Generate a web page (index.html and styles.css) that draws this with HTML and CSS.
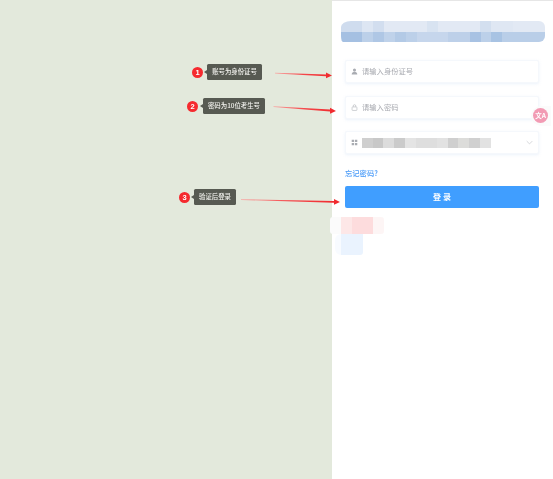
FILE: index.html
```html
<!DOCTYPE html>
<html lang="zh-CN">
<head>
<meta charset="utf-8">
<title>登录</title>
<link rel="stylesheet" href="styles.css">
</head>
<body>
<div class="page">
  <section class="canvas">
    <div class="note note-1"><span class="badge">1</span><span class="tip">账号为身份证号</span></div>
    <div class="note note-2"><span class="badge">2</span><span class="tip">密码为10位考生号</span></div>
    <div class="note note-3"><span class="badge">3</span><span class="tip">验证后登录</span></div>
  </section>
  <main class="panel">
    <div class="logo"><div class="logo-top"></div><div class="logo-bottom"></div></div>
    <form class="form">
      <div class="field field-first">
        <svg class="icon" viewBox="0 0 10 10"><circle cx="5" cy="3" r="2.2" fill="#a9acb2"/><path d="M1 9.2c0-2.6 1.8-3.4 4-3.4s4 .8 4 3.4z" fill="#a9acb2"/></svg>
        <span class="placeholder">请输入身份证号</span>
      </div>
      <div class="field">
        <svg class="icon" viewBox="0 0 10 10"><rect x="1.5" y="4.2" width="7" height="5" rx="1" fill="none" stroke="#b4b7bc" stroke-width=".9"/><path d="M3.2 4.2V2.8a1.8 1.8 0 0 1 3.6 0v1.4" fill="none" stroke="#b4b7bc" stroke-width=".9"/></svg>
        <span class="placeholder">请输入密码</span>
      </div>
      <div class="field field-select">
        <svg class="icon" viewBox="0 0 10 10"><path d="M1 1h3.4v3.4H1zM5.6 1H9v3.4H5.6zM1 5.6h3.4V9H1zM5.6 5.6H9V9H5.6z" fill="#a9acb2"/></svg>
        <div class="mosaic"></div>
        <svg class="chevron" viewBox="0 0 10 6"><path d="M1 1l4 4 4-4" fill="none" stroke="#c4c7cc" stroke-width="1"/></svg>
      </div>
      <a class="forgot" href="#">忘记密码?</a>
      <button class="submit" type="button">登 录</button>
    </form>
    <div class="smudge"><div class="smudge-red"></div><div class="smudge-blue"></div></div>
    <div class="float-tab"><span class="float-dot">文A</span></div>
  </main>
  <svg class="arrows" viewBox="0 0 553 479">
    <defs>
      <linearGradient id="fade" x1="0" y1="0" x2="1" y2="0"><stop offset="0" stop-color="#f8a8a4"/><stop offset=".5" stop-color="#f4474a"/><stop offset="1" stop-color="#f0282c"/></linearGradient>
    </defs>
    <path d="M275 72.8 L326 74.6 L326 72.6 L332 75.6 L326 78.2 L326 76.2 L275 73.4z" fill="url(#fade)"/>
    <path d="M273.5 106.3 L330 109.6 L330 107.8 L336 110.9 L330 113.8 L330 111.5 L273.5 107z" fill="url(#fade)"/>
    <path d="M241 199.2 L334 201 L334 199 L340 202 L334 204.8 L334 202.8 L241 199.9z" fill="url(#fade)"/>
  </svg>
</div>
</body>
</html>
```
FILE: styles.css
```css
* { box-sizing: border-box; }
html, body { margin: 0; padding: 0; }
body { font-family: "Noto Sans CJK SC", "Liberation Sans", sans-serif; background: #fff; }
.page { position: relative; display: flex; width: 553px; height: 479px; overflow: hidden; filter: blur(.3px); }
.canvas { position: relative; flex: 0 0 332px; background: #e3e9dc; }
.panel {
  position: relative; flex: 1; padding: 0 13px; background: #fff;
  border-top: 1px solid #e6e6e6; border-right: 1px solid #f0f0f0; margin-right: 1px;
}

.note { position: absolute; display: flex; align-items: center; }
.note-1 { left: 192px; top: 64px; gap: 4px; }
.note-2 { left: 187px; top: 98px; gap: 5px; }
.note-3 { left: 179px; top: 189px; gap: 4px; }
.badge {
  width: 11px; height: 11px; border-radius: 50%; background: #f52a2f; color: #fff;
  font: 700 7.5px/11px "Liberation Sans", sans-serif; text-align: center;
}
.tip {
  position: relative; height: 16px; padding: 0 2px; border-radius: 1.5px; background: #575a52;
  color: #f4f4f0; font-size: 6.4px; font-weight: 500; line-height: 16px; text-align: center; white-space: nowrap;
}
.note-1 .tip { width: 55px; }
.note-2 .tip { width: 62px; }
.note-3 .tip { width: 42px; }
.tip::before {
  content: ""; position: absolute; left: -3px; top: 50%; margin-top: -2px;
  border: 2px solid transparent; border-left: 0; border-right: 3px solid #575a52;
}

.logo { width: 204px; margin: 20px 0 0 -4px; height: 21px; overflow: hidden; border-radius: 10px 6px 6px 2px / 6px; }
.logo-top {
  height: 11px;
  background: linear-gradient(90deg, #cfdcee 0 21px, #dde6f3 21px 32px, #d2deef 32px 43px, #e2e9f4 43px 86px, #d8e3f1 86px 97px, #e2e9f4 97px 139px, #d3dfef 139px 150px, #dfe7f3 150px 172px, #e2e9f4 172px 204px);
}
.logo-bottom {
  height: 10px;
  background: linear-gradient(90deg, #a5c0e2 0 21px, #bcd0e9 21px 32px, #afc7e5 32px 43px, #bfd2ea 43px 54px, #b3cae6 54px 65px, #bcd0e9 65px 76px, #c6d6ec 76px 107px, #bdd0e9 107px 129px, #a8c2e3 129px 140px, #bcd0e9 140px 150px, #a8c3e3 150px 161px, #b9cee8 161px 204px);
}

.form { display: flex; flex-direction: column; margin-top: 18px; width: 194px; }
.field {
  display: flex; align-items: center; height: 23px; padding: 0 5px; margin-bottom: 12px;
  background: #fff; border: 1px solid #f5f8fc; border-radius: 2px;
  box-shadow: 0 1px 3px rgba(180, 205, 240, .25);
}
.field-first { margin-bottom: 13px; }
.field-select { margin-bottom: 0; }
.icon { width: 7px; height: 7px; flex: none; margin-right: 4px; }
.placeholder { color: #a8aab0; font-size: 7.3px; line-height: 1; }
.mosaic {
  width: 129px; height: 10px;
  background: linear-gradient(90deg, #cfcfcf 0 11px, #c8c8c8 11px 21px, #dcdcdc 21px 32px, #cbcbcb 32px 43px, #e4e4e4 43px 54px, #dedede 54px 75px, #e2e2e2 75px 86px, #cfcfcf 86px 96px, #dcdcda 96px 107px, #d0d0d0 107px 118px, #e2e2e2 118px 129px);
}
.chevron { width: 7px; height: 5px; margin-left: auto; }
.forgot { margin-top: 14px; color: #4a9bf8; font-size: 7.3px; font-weight: 500; line-height: 11px; text-decoration: none; }
.submit {
  height: 22px; margin-top: 7px; padding: 0; border: 0; border-radius: 2px;
  background: #409eff; color: #fff; font: 700 8px/22px "Noto Sans CJK SC", sans-serif;
}

.smudge { position: absolute; left: -2px; top: 216px; width: 56px; height: 42px; }
.smudge-red {
  width: 54px; height: 17px; border-radius: 3px;
  background: linear-gradient(90deg, #fbfbfb 0 11px, #fde7e7 11px 22px, #fddcdd 22px 43px, #fdf5f5 43px 54px);
}
.smudge-blue {
  width: 28px; height: 21px; margin-left: 5px;
  background: linear-gradient(90deg, #f8fbff 0 6px, #eaf3fe 6px 28px);
  border-radius: 6px 0 3px 6px;
}
.float-tab {
  position: absolute; left: 199px; top: 105px; width: 20px; height: 20px; padding: 2px;
  background: #fbfbfb; border-radius: 10px 0 0 10px;
}
.float-dot {
  display: block; width: 15px; height: 15px; border-radius: 50%; background: #f29bb4;
  color: #fff; font-size: 6.5px; font-weight: 700; line-height: 15px; text-align: center; white-space: nowrap;
}
.arrows { position: absolute; left: 0; top: 0; width: 553px; height: 479px; pointer-events: none; }
```
